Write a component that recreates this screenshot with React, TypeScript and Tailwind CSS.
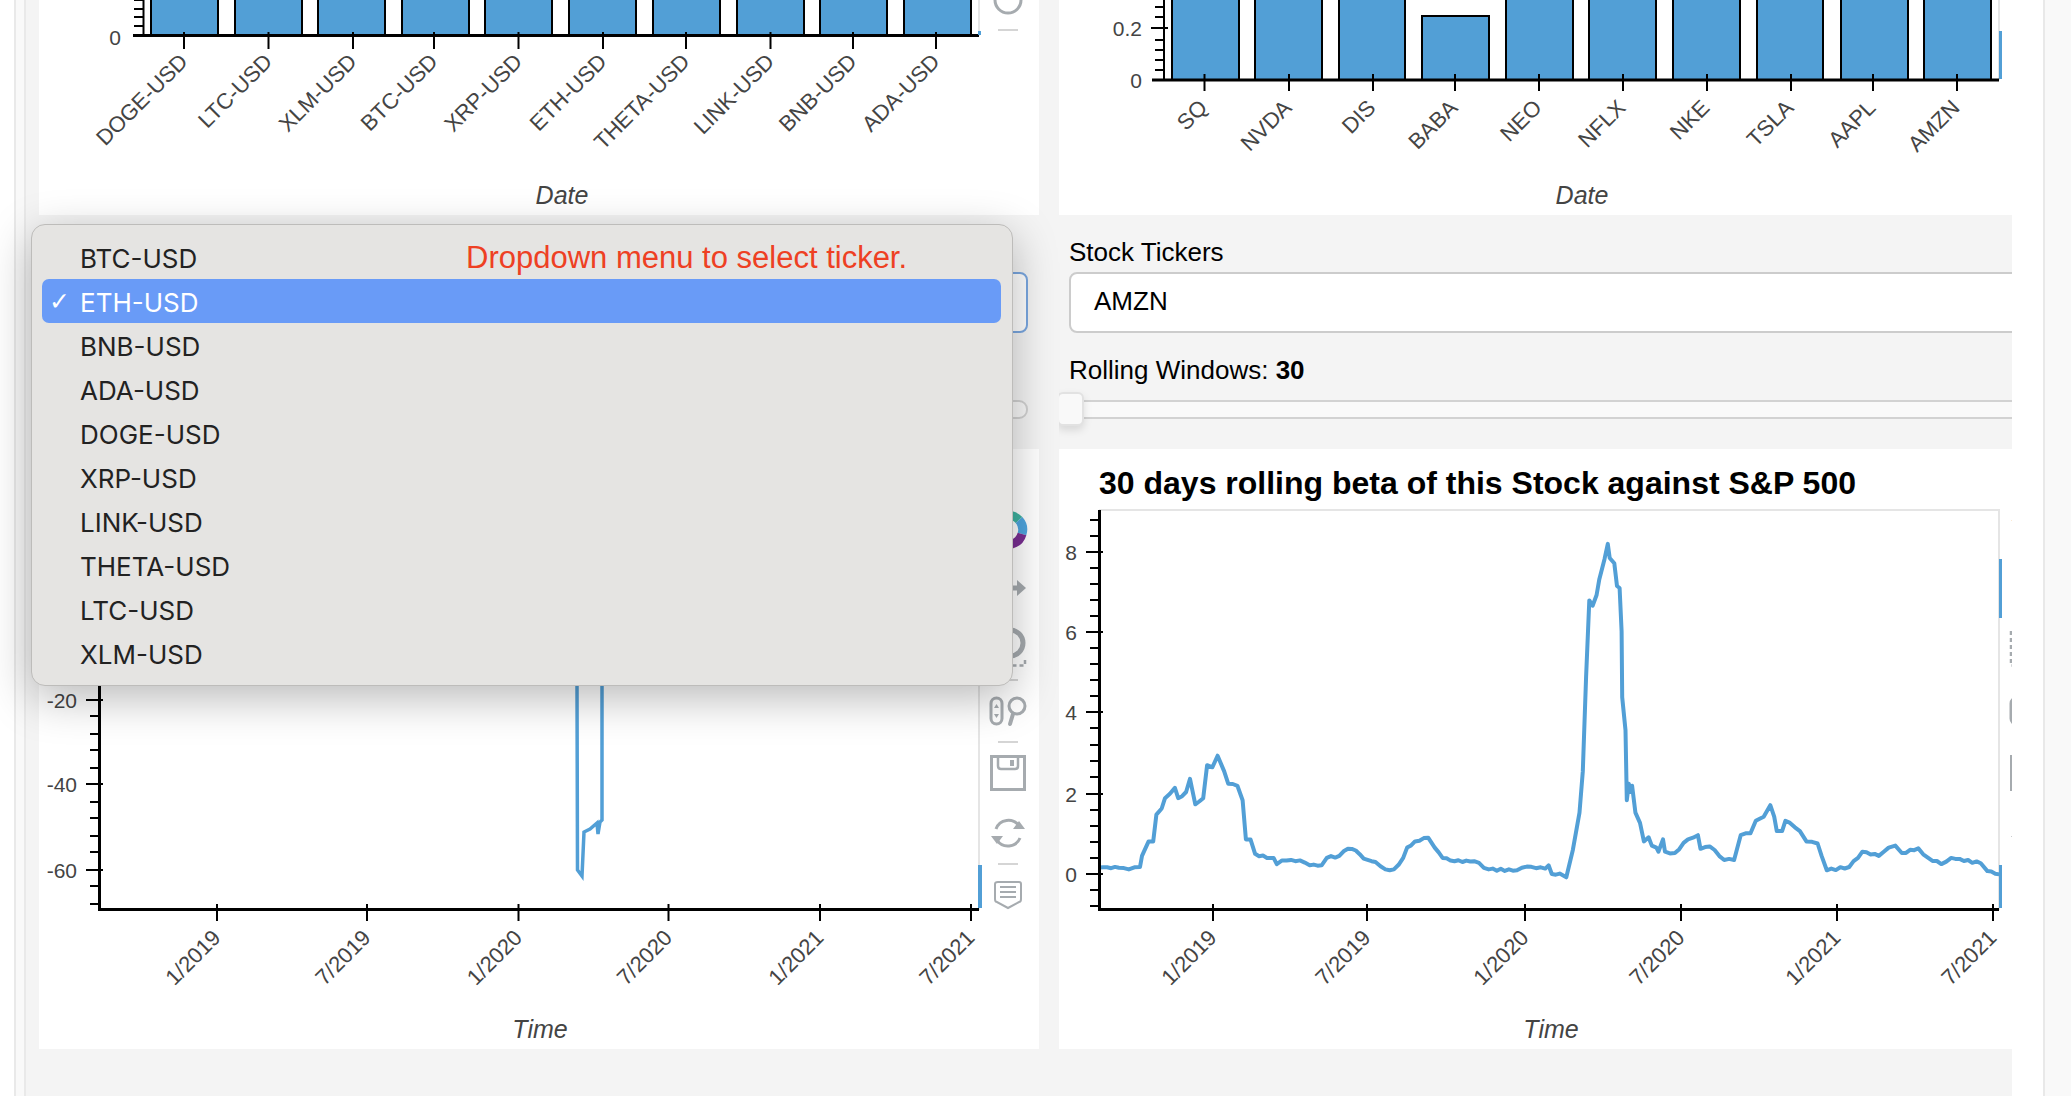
import React from 'react';

const BLUE = '#529fd6';
const INK = '#444444';
const TOOL = '#a6abaf';
const SANS = '"Liberation Sans", Arial, sans-serif';

const cryptoBars = [
  [151, 218], [235, 302], [318, 385], [402, 469], [485, 552],
  [569, 636], [653, 720], [737, 804], [820, 887], [904, 971],
];
const cryptoTicks = [
  ['DOGE-USD', 184], ['LTC-USD', 268.5], ['XLM-USD', 353], ['BTC-USD', 434], ['XRP-USD', 518.5],
  ['ETH-USD', 603], ['THETA-USD', 686], ['LINK-USD', 770.5], ['BNB-USD', 853], ['ADA-USD', 936],
] as const;

const stockBars = [
  [1172, 1239], [1255, 1322], [1339, 1405], [1422, 1489], [1506, 1573],
  [1589, 1656], [1673, 1740], [1757, 1823], [1841, 1908], [1924, 1991],
];
const stockTicks = [
  ['SQ', 1204.5], ['NVDA', 1289], ['DIS', 1373], ['BABA', 1455], ['NEO', 1539],
  ['NFLX', 1623], ['NKE', 1707], ['TSLA', 1791], ['AAPL', 1873], ['AMZN', 1957],
] as const;

const tickers = ['BTC-USD', 'ETH-USD', 'BNB-USD', 'ADA-USD', 'DOGE-USD', 'XRP-USD', 'LINK-USD', 'THETA-USD', 'LTC-USD', 'XLM-USD'];

// traced off the reference, in a 1.52 x 2.427 scaled crop starting at (1040, 450)
const betaRaw = [
  [90, 1013], [120, 1014], [135, 1018], [152, 1012], [155, 985], [165, 950], [172, 950], [177, 885], [185, 870], [190, 845],
  [205, 820], [210, 845], [222, 830], [228, 798], [236, 860], [248, 845], [254, 765], [262, 770], [270, 742], [280, 780],
  [286, 810], [300, 815], [308, 850], [313, 945], [320, 945], [327, 980], [345, 990], [355, 990], [360, 1005], [368, 996],
  [395, 996], [410, 1008], [428, 1008], [436, 990], [455, 985], [468, 968], [480, 972], [492, 992], [510, 1000], [525, 1018],
  [538, 1018], [552, 990], [558, 965], [570, 950], [590, 941], [600, 965], [612, 990], [630, 998], [660, 998], [682, 1018],
  [725, 1020], [740, 1011], [768, 1016], [773, 1008], [778, 1029], [790, 1028], [800, 1037], [810, 970], [820, 880], [825, 780],
  [830, 550], [835, 365], [840, 378], [846, 352], [850, 315], [858, 265], [863, 228], [866, 262], [873, 275], [877, 330],
  [881, 335], [884, 440], [885, 600], [890, 680], [892, 850], [895, 810], [898, 830], [900, 815], [905, 880], [912, 905],
  [918, 950], [925, 940], [930, 960], [937, 965], [940, 975], [947, 945], [950, 975], [965, 978], [985, 945], [1000, 935],
  [1004, 968], [1018, 962], [1040, 995], [1055, 995], [1065, 935], [1080, 930], [1088, 900], [1100, 890], [1110, 862], [1116, 890],
  [1120, 925], [1128, 925], [1133, 900], [1140, 905], [1155, 925], [1165, 950], [1182, 955], [1188, 985], [1196, 1020], [1230, 1012],
  [1250, 975], [1275, 985], [1290, 965], [1300, 960], [1310, 978], [1335, 967], [1350, 990], [1370, 1005], [1385, 990], [1430, 1003],
  [1440, 1022], [1458, 1030],
];

// the real series is daily, so long segments get a little wobble
function roughen(raw: number[][]) {
  const out: string[] = [];
  raw.forEach(([x, y], i) => {
    const next = raw[i + 1];
    const px = 1040 + x / 1.52;
    const py = 450 + y / 2.427;
    out.push(`${px.toFixed(1)},${py.toFixed(1)}`);
    if (!next) return;
    const steps = Math.floor((next[0] - x) / 6);
    for (let k = 1; k < steps; k++) {
      const t = k / steps;
      const nx = 1040 + (x + (next[0] - x) * t) / 1.52;
      const ny = 450 + (y + (next[1] - y) * t) / 2.427 + Math.sin((i + 1) * 12.9898 + k * 78.233) * 1.1;
      out.push(`${nx.toFixed(1)},${ny.toFixed(1)}`);
    }
  });
  return out.join(' ');
}
const betaLine = roughen(betaRaw);

const dropLine = '577,685 577.5,870 582,876 584,832 590,829 597,823 598,834 600,822 602,820 602,685';

function RotatedLabel({ x, y, text }: { x: number; y: number; text: string }) {
  return (
    <text x={x} y={y} textAnchor="end" fontSize={22} fill={INK} fontFamily={SANS} transform={`rotate(-45 ${x} ${y})`}>
      {text}
    </text>
  );
}

function AxisTitle({ x, text }: { x: number; text: string }) {
  return (
    <text x={x} y={1038} textAnchor="middle" fontSize={25} fontStyle="italic" fill={INK} fontFamily={SANS}>
      {text}
    </text>
  );
}

function Ticks({ xs, y }: { xs: number[]; y: number }) {
  return (
    <g stroke="#000" strokeWidth={2}>
      {xs.map((x) => (
        <line key={x} x1={x} x2={x} y1={y - 6} y2={y + 11} />
      ))}
    </g>
  );
}

function YTicks({ x, major, minor }: { x: number; major: number[]; minor: number[] }) {
  return (
    <g stroke="#000" strokeWidth={2}>
      {major.map((y) => (
        <line key={y} x1={x - 13} x2={x + 4} y1={y} y2={y} />
      ))}
      {minor.map((y) => (
        <line key={y} x1={x - 9} x2={x} y1={y} y2={y} />
      ))}
    </g>
  );
}

// bokeh toolbar, x is the centre of the column
function Toolbar({ x }: { x: number }) {
  return (
    <g transform={`translate(${x - 1008} 0)`} fill="none" stroke={TOOL} strokeWidth={3}>
      <g strokeWidth={9}>
        <path d="M995.5 523 A14.5 14.5 0 0 1 1004 516" stroke="#ee9b37" />
        <path d="M1004 516 A14.5 14.5 0 0 1 1019 520" stroke="#3fb3a0" />
        <path d="M1019 520 A14.5 14.5 0 0 1 1022 534" stroke="#4fa6e0" />
        <path d="M1022 534 A14.5 14.5 0 0 1 1012 544" stroke="#7a2f93" />
        <path d="M1012 544 A14.5 14.5 0 0 1 1001 543" stroke="#c3243e" />
      </g>
      <path d="M992 588 H1020" strokeWidth={5} />
      <path d="M1017 580 L1026 588 L1017 596 Z M992 588 L1000 580 L1000 596 Z" fill={TOOL} stroke="none" />
      <path d="M1008 572 L1003 578 H1013 Z M1008 604 L1003 598 H1013 Z" fill={TOOL} stroke="none" />
      <circle cx={1010} cy={643} r={13} strokeWidth={5} />
      <path d="M991 631 V665.5 H1025 V657" strokeWidth={2.5} strokeDasharray="4 3" />
      <line x1={998} x2={1018} y1={680} y2={680} stroke="#d5d5d5" strokeWidth={2} />
      <rect x={991} y={698} width={11} height={26} rx={5.5} strokeWidth={3} />
      <path d="M996.5 704 L994 708 H999 Z M996.5 718 L994 714 H999 Z" fill={TOOL} stroke="none" />
      <circle cx={1017} cy={706} r={8} strokeWidth={3} />
      <path d="M1013 714 L1010 724" strokeWidth={4} strokeLinecap="round" />
      <line x1={998} x2={1018} y1={742} y2={742} stroke="#d5d5d5" strokeWidth={2} />
      <rect x={991.5} y={756.5} width={33} height={33} strokeWidth={3} />
      <path d="M998 757 V766 Q998 769 1001 769 H1015 Q1018 769 1018 766 V757" strokeWidth={2.5} />
      <rect x={1010} y={760} width={4} height={6} fill={TOOL} stroke="none" />
      <path d="M996 829 A13 13 0 0 1 1019 826 M1020 838 A13 13 0 0 1 997 840" strokeWidth={3} />
      <path d="M1013 829 L1025 829 L1019 821 Z M991 836 L1003 836 L997 844 Z" fill={TOOL} stroke="none" />
      <line x1={998} x2={1018} y1={864} y2={864} stroke="#d5d5d5" strokeWidth={2} />
      <path d="M998 882 H1019 Q1021 882 1021 884 V899 Q1021 902 1019 902 L1008 908 L997 902 Q995 902 995 899 V884 Q995 882 998 882 Z" strokeWidth={2} />
      <path d="M1000 887 H1016 M1000 892 H1016 M1000 897 H1016" strokeWidth={2} />
    </g>
  );
}

export default function App() {
  return (
    <div className="relative flex h-[1096px] w-[2071px] overflow-hidden bg-white" style={{ fontFamily: SANS }}>
      <div className="w-[14px] shrink-0 bg-white" />
      <div className="w-[12px] shrink-0 border-x-2 border-[#e9e9e9] bg-[#f9f9f9]" />

      <main className="flex w-[1986px] shrink-0 gap-[20px] bg-[#f4f4f4] pl-[13px]">
        {/* crypto column, its labels sit behind the open popup */}
        <section className="flex w-[1000px] shrink-0 flex-col">
          <div className="h-[215px] bg-white">
            <svg width={1000} height={215} viewBox="39 0 1000 215" className="block">
              <line x1={979} x2={979} y1={0} y2={36} stroke="#e5e5e5" strokeWidth={2} />
              {cryptoBars.map(([a, b]) => (
                <rect key={a} x={a} y={-4} width={b - a} height={40} fill={BLUE} stroke="#000" strokeWidth={2} />
              ))}
              <line x1={143.5} x2={143.5} y1={0} y2={36} stroke="#000" strokeWidth={2} />
              <line x1={133} x2={979} y1={35.5} y2={35.5} stroke="#000" strokeWidth={3} />
              <YTicks x={143} major={[]} minor={[0, 9, 17, 26]} />
              <Ticks xs={cryptoTicks.map((t) => t[1])} y={38} />
              <rect x={978} y={31} width={3} height={4} fill={BLUE} />
              <text x={121} y={45} textAnchor="end" fontSize={21} fill={INK}>0</text>
              {cryptoTicks.map(([label, x]) => (
                <RotatedLabel key={label} x={x + 5} y={63} text={label} />
              ))}
              <text x={562} y={204} textAnchor="middle" fontSize={25} fontStyle="italic" fill={INK}>Date</text>
              <path d="M995 0 A13 13 0 0 0 1021 0" fill="none" stroke={TOOL} strokeWidth={3} />
              <line x1={998} x2={1018} y1={30} y2={30} stroke="#d5d5d5" strokeWidth={2} />
            </svg>
          </div>
          <div className="flex h-[234px] flex-col pl-[10px]">
            <div className="mt-[22px] h-[35px]" />
            <div className="h-[61px] w-[979px] rounded-[8px] border-2 border-[#7aa7e0] bg-white" />
            <div className="mt-[22px] h-[45px]" />
            <div className="h-[19px] w-[979px] rounded-[9px] border-2 border-[#d2d2d2] bg-[#f9f9f9]" />
          </div>
          <div className="h-[600px] bg-white">
            <svg width={1000} height={600} viewBox="39 449 1000 600" className="block">
              <line x1={979} x2={979} y1={449} y2={910} stroke="#e5e5e5" strokeWidth={2} />
              <polyline points={dropLine} fill="none" stroke={BLUE} strokeWidth={3.5} />
              <line x1={99.5} x2={99.5} y1={500} y2={910} stroke="#000" strokeWidth={3} />
              <line x1={98} x2={979} y1={909.5} y2={909.5} stroke="#000" strokeWidth={3} />
              <YTicks x={99} major={[700, 784, 870]} minor={[716, 734, 750, 768, 802, 818, 836, 852, 886, 904]} />
              <Ticks xs={[217, 367, 518.5, 668.5, 820, 971]} y={910} />
              <rect x={978} y={865} width={4} height={43} fill={BLUE} />
              <text x={77} y={708} textAnchor="end" fontSize={21} fill={INK}>-20</text>
              <text x={77} y={792} textAnchor="end" fontSize={21} fill={INK}>-40</text>
              <text x={77} y={878} textAnchor="end" fontSize={21} fill={INK}>-60</text>
              {([['1/2019', 217], ['7/2019', 367], ['1/2020', 518.5], ['7/2020', 668.5], ['1/2021', 820], ['7/2021', 971]] as const).map(([label, x]) => (
                <RotatedLabel key={label} x={x + 5} y={939} text={label} />
              ))}
              <AxisTitle x={540} text="Time" />
              <Toolbar x={1008} />
            </svg>
          </div>
        </section>

        {/* stock column */}
        <section className="flex w-[953px] shrink-0 flex-col overflow-hidden">
          <div className="h-[215px] bg-white">
            <svg width={953} height={215} viewBox="1059 0 953 215" className="block">
              <line x1={1999} x2={1999} y1={0} y2={80} stroke="#e5e5e5" strokeWidth={2} />
              {stockBars.map(([a, b], i) => (
                <rect key={a} x={a} y={i === 3 ? 16 : -4} width={b - a} height={i === 3 ? 64 : 84} fill={BLUE} stroke="#000" strokeWidth={2} />
              ))}
              <line x1={1164} x2={1164} y1={0} y2={80} stroke="#000" strokeWidth={2} />
              <line x1={1152} x2={1999} y1={80} y2={80} stroke="#000" strokeWidth={3} />
              <YTicks x={1164} major={[28]} minor={[7, 17, 40, 50, 60, 70]} />
              <Ticks xs={stockTicks.map((t) => t[1])} y={80} />
              <rect x={1999} y={31} width={3} height={48} fill={BLUE} />
              <text x={1142} y={36} textAnchor="end" fontSize={21} fill={INK}>0.2</text>
              <text x={1142} y={88} textAnchor="end" fontSize={21} fill={INK}>0</text>
              {stockTicks.map(([label, x]) => (
                <RotatedLabel key={label} x={x + 4} y={109} text={label} />
              ))}
              <text x={1582} y={204} textAnchor="middle" fontSize={25} fontStyle="italic" fill={INK}>Date</text>
            </svg>
          </div>
          <div className="flex h-[234px] flex-col pl-[10px]">
            <div className="mt-[22px] h-[35px] text-[26px] leading-[30px] text-black">Stock Tickers</div>
            <div className="flex h-[61px] w-[1000px] items-center rounded-[8px] border-2 border-[#cccccc] bg-white pb-[3px] pl-[23px] text-[26px] text-black">
              AMZN
            </div>
            <div className="mt-[22px] h-[45px] text-[26px] leading-[30px] text-black">
              Rolling Windows: <b>30</b>
            </div>
            <div className="relative -ml-[12px] h-[19px] w-[1000px] border-y-2 border-[#d2d2d2] bg-[#f9f9f9]">
              <div className="absolute -top-[10px] left-0 h-[34px] w-[27px] rounded-[6px] border-2 border-[#e2e2e2] bg-[#f9f9f9] shadow-[0_4px_8px_rgba(0,0,0,0.12)]" />
            </div>
          </div>
          <div className="h-[600px] bg-white">
            <svg width={953} height={600} viewBox="1059 449 953 600" className="block">
              <text x={1099} y={494} fontSize={32} fontWeight={700} fill="#000">30 days rolling beta of this Stock against S&amp;P 500</text>
              <path d="M1099 510 H1999 V910" fill="none" stroke="#e5e5e5" strokeWidth={2} />
              <polyline points={betaLine} fill="none" stroke={BLUE} strokeWidth={4} strokeLinejoin="round" />
              <line x1={1099.5} x2={1099.5} y1={510} y2={910} stroke="#000" strokeWidth={3} />
              <line x1={1098} x2={1999} y1={909.5} y2={909.5} stroke="#000" strokeWidth={3} />
              <YTicks
                x={1099}
                major={[552, 632, 712, 794, 874]}
                minor={[520, 536, 568, 584, 600, 616, 648, 664, 680, 696, 728, 745, 761, 777, 810, 826, 842, 858, 890, 906]}
              />
              <Ticks xs={[1213, 1367, 1525, 1681, 1837, 1993]} y={910} />
              <rect x={1999} y={559} width={3} height={59} fill={BLUE} />
              <rect x={1999} y={865} width={3} height={43} fill={BLUE} />
              {[[8, 552], [6, 632], [4, 712], [2, 794], [0, 874]].map(([label, y]) => (
                <text key={label} x={1077} y={y + 8} textAnchor="end" fontSize={21} fill={INK}>{label}</text>
              ))}
              {([['1/2019', 1213], ['7/2019', 1367], ['1/2020', 1525], ['7/2020', 1681], ['1/2021', 1837], ['7/2021', 1993]] as const).map(([label, x]) => (
                <RotatedLabel key={label} x={x + 5} y={939} text={label} />
              ))}
              <AxisTitle x={1551} text="Time" />
              <Toolbar x={2028} />
            </svg>
          </div>
        </section>
      </main>

      <div className="w-[31px] shrink-0 bg-white" />
      <div className="w-[28px] shrink-0 border-l-2 border-[#e9e9e9] bg-[#f9f9f9]" />

      {/* native select popup */}
      <div className="absolute left-[31px] top-[224px] h-[462px] w-[982px] rounded-[14px] border border-[#bdbcba] bg-[#e5e4e2] shadow-[0_12px_45px_rgba(0,0,0,0.28)]">
        <div className="flex flex-col pl-[10px] pr-[11px] pt-[10px]">
          {tickers.map((t, i) => (
            <div
              key={t}
              className={`relative flex h-[44px] items-center rounded-[7px] pl-[38px] pt-[2px] text-[26px] ${
                i === 1 ? 'bg-[#699bf7] text-white' : 'text-[#222222]'
              }`}
              style={{ fontFamily: 'Inter, sans-serif' }}
            >
              {i === 1 && (
                <span className="absolute left-[7px] text-[25px] font-bold" style={{ fontFamily: '"DejaVu Sans", sans-serif' }}>
                  ✓
                </span>
              )}
              {t}
            </div>
          ))}
        </div>
        <span className="absolute left-[434px] top-[13px] text-[31px] leading-[40px] text-[#ee4023]">Dropdown menu to select ticker.</span>
      </div>
    </div>
  );
}
